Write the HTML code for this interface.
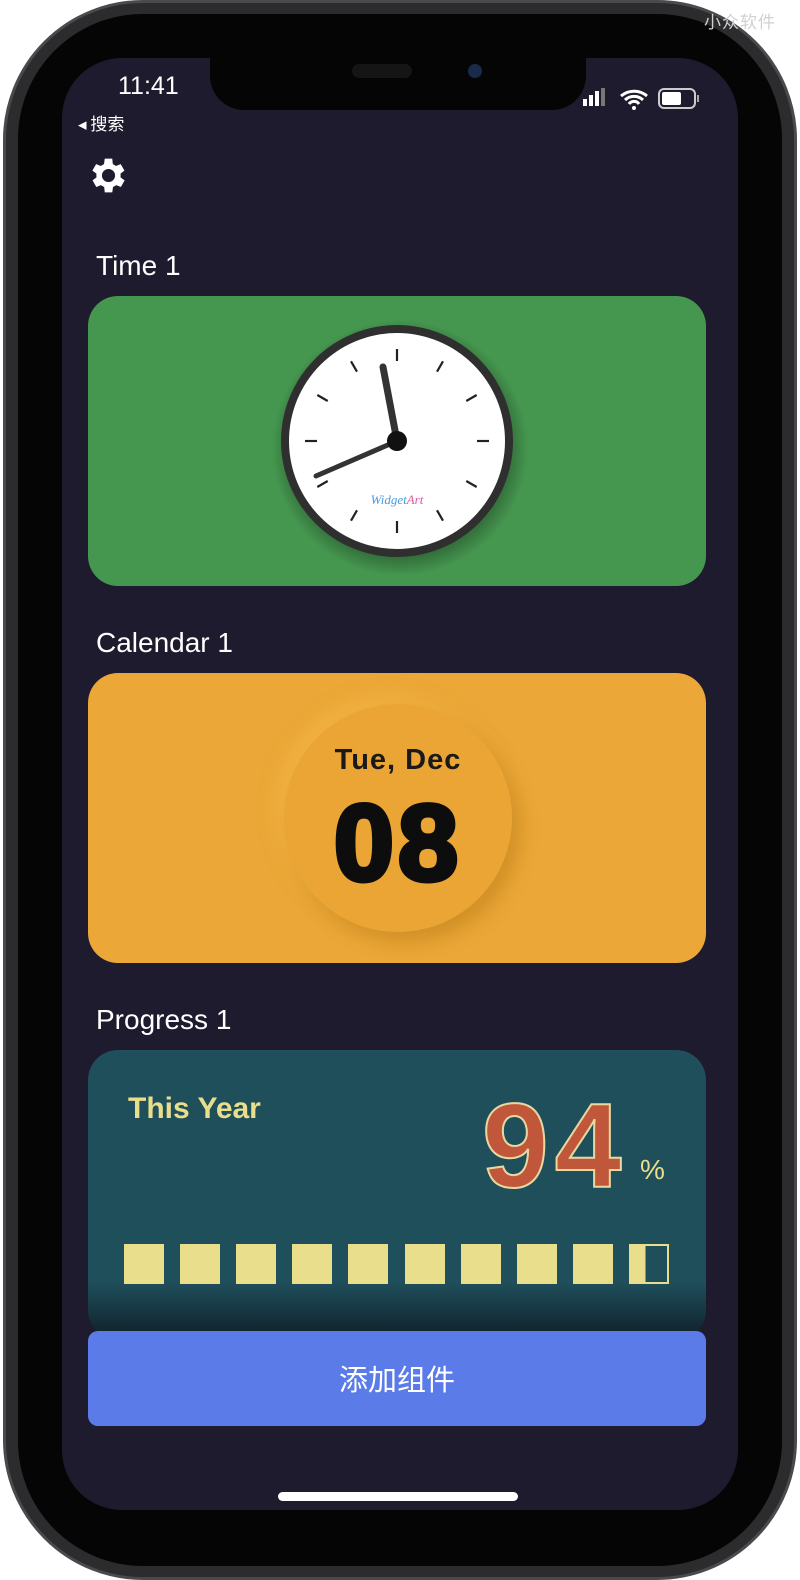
<!DOCTYPE html>
<html><head><meta charset="utf-8"><style>
*{margin:0;padding:0;box-sizing:border-box}
body{width:800px;height:1580px;background:#fff;position:relative;overflow:hidden;font-family:"Liberation Sans","Noto Sans CJK SC",sans-serif}
.abs{position:absolute}
.phone{left:3px;top:0;width:794px;height:1580px;border-radius:140px;background:#2c2c2e;border:3px solid #4a4a4c}
.bezel{left:18px;top:14px;width:764px;height:1552px;border-radius:125px;background:#050505}
.screen{left:62px;top:58px;width:676px;height:1452px;border-radius:60px;background:#1e1b2e;overflow:hidden}
.notch{left:210px;top:50px;width:376px;height:60px;background:#050505;border-radius:0 0 34px 34px}
.lbl{color:#fff;font-size:28px;font-weight:500}
.card{left:88px;width:618px;height:290px;border-radius:30px}
.sq{top:1244px;width:40px;height:40px;background:#e8de8c}
</style></head><body>
<div class="abs phone"></div>
<div class="abs bezel"></div>
<div class="abs screen"></div>
<div class="abs notch"></div>
<div class="abs" style="left:704px;top:8px;color:#d0d0d0;font-size:17px;letter-spacing:1px;font-family:'Noto Sans CJK SC',sans-serif;z-index:5">小众软件</div>
<div class="abs" style="left:352px;top:64px;width:60px;height:14px;border-radius:7px;background:#151515"></div>
<div class="abs" style="left:468px;top:64px;width:14px;height:14px;border-radius:7px;background:#1a2a4a"></div>
<div class="abs" style="left:118px;top:72px;color:#fff;font-size:25px;font-weight:500">11:41</div>
<div class="abs" style="left:78px;top:110px;color:#fff;font-size:17px;font-family:'Noto Sans CJK SC',sans-serif">◂ 搜索</div>
<svg class="abs" style="left:580px;top:86px" width="125" height="26">
<rect x="3" y="13" width="4" height="7" fill="#fff"/><rect x="9" y="9" width="4" height="11" fill="#fff"/><rect x="15" y="5" width="4" height="15" fill="#fff"/><rect x="21" y="2" width="4" height="18" fill="#777"/>
<path d="M41 10a20 20 0 0 1 26 0M45 14a13 13 0 0 1 18 0M49 18a6 6 0 0 1 10 0" stroke="#fff" stroke-width="3" fill="none"/><circle cx="54" cy="22" r="2" fill="#fff"/>
<rect x="79" y="3" width="36" height="19" rx="5" stroke="#ccc" stroke-width="2" fill="none"/><rect x="82" y="6" width="19" height="13" rx="2" fill="#fff"/><rect x="117" y="9" width="2" height="7" fill="#aaa"/>
</svg>
<svg class="abs" style="left:86px;top:153px" width="45" height="45" viewBox="0 0 24 24"><path fill="#fff" d="M19.4 13a7.5 7.5 0 0 0 0-2l2.1-1.6-2-3.5-2.5 1a7.4 7.4 0 0 0-1.7-1L15 3h-4l-.4 2.9a7.4 7.4 0 0 0-1.7 1l-2.5-1-2 3.5L6.6 11a7.5 7.5 0 0 0 0 2l-2.1 1.6 2 3.5 2.5-1a7.4 7.4 0 0 0 1.7 1L11 21h4l.4-2.9a7.4 7.4 0 0 0 1.7-1l2.5 1 2-3.5zM13 15.5a3.5 3.5 0 1 1 0-7 3.5 3.5 0 0 1 0 7z" transform="translate(-1 0)"/></svg>
<div class="abs lbl" style="left:96px;top:250px">Time 1</div>
<div class="abs card" style="top:296px;background:#45964f"></div>
<svg class="abs" style="left:270px;top:314px" width="260" height="260">
<defs><radialGradient id="sh"><stop offset="0.8" stop-color="#000" stop-opacity=".35"/><stop offset="1" stop-color="#000" stop-opacity="0"/></radialGradient></defs>
<circle cx="130" cy="134" r="128" fill="url(#sh)"/>
<circle cx="127" cy="127" r="116" fill="#2f2f2f"/>
<circle cx="127" cy="127" r="108" fill="#fff"/>
<g stroke="#222" stroke-width="2.2" transform="translate(127 127)">
<line x1="0" y1="-92" x2="0" y2="-80"/><line x1="0" y1="92" x2="0" y2="80"/><line x1="-92" y1="0" x2="-80" y2="0"/><line x1="92" y1="0" x2="80" y2="0"/>
<g transform="rotate(30)"><line x1="0" y1="-92" x2="0" y2="-80"/><line x1="0" y1="92" x2="0" y2="80"/><line x1="-92" y1="0" x2="-80" y2="0"/><line x1="92" y1="0" x2="80" y2="0"/></g>
<g transform="rotate(60)"><line x1="0" y1="-92" x2="0" y2="-80"/><line x1="0" y1="92" x2="0" y2="80"/><line x1="-92" y1="0" x2="-80" y2="0"/><line x1="92" y1="0" x2="80" y2="0"/></g>
</g>
<line x1="127" y1="127" x2="113" y2="53" stroke="#333" stroke-width="7" stroke-linecap="round"/>
<line x1="127" y1="127" x2="46" y2="162" stroke="#333" stroke-width="5" stroke-linecap="round"/>
<circle cx="127" cy="127" r="10" fill="#111"/>
<text x="127" y="190" text-anchor="middle" font-size="13" font-style="italic" font-family="Liberation Serif,serif" fill="#4a9be0">Widget<tspan fill="#e05a9a">Art</tspan></text>
</svg>
<div class="abs lbl" style="left:96px;top:627px">Calendar 1</div>
<div class="abs card" style="top:673px;background:#eba737"></div>
<div class="abs" style="left:284px;top:704px;width:228px;height:228px;border-radius:50%;background:#eaa535;box-shadow:8px 10px 18px rgba(160,100,10,.35),-8px -8px 18px rgba(255,200,90,.35)"></div>
<div class="abs" style="left:284px;top:744px;width:228px;text-align:center;font-size:29px;font-weight:bold;color:#1a1a1a;letter-spacing:1px">Tue, Dec</div>
<div class="abs" style="left:284px;top:786px;width:228px;text-align:center;font-size:108px;font-weight:900;color:#0d0d0d;-webkit-text-stroke:5px #0d0d0d;letter-spacing:4px;line-height:1.05">08</div>
<div class="abs lbl" style="left:96px;top:1004px">Progress 1</div>
<div class="abs card" style="top:1050px;height:290px;background:linear-gradient(#1f4f5b 0,#1f4f5b 80%,#0f1e28 100%)"></div>
<div class="abs" style="left:128px;top:1092px;font-size:30px;font-weight:bold;color:#e8de8c">This Year</div>
<div class="abs" style="left:482px;top:1080px;font-size:120px;font-weight:bold;font-family:'Liberation Sans',sans-serif;color:#c0573a;-webkit-text-stroke:2px #e8d8a0;letter-spacing:6px;line-height:1.1">94</div>
<div class="abs" style="left:640px;top:1154px;font-size:28px;color:#e8de8c">%</div>
<div class="abs sq" style="left:124px"></div><div class="abs sq" style="left:180px"></div><div class="abs sq" style="left:236px"></div><div class="abs sq" style="left:292px"></div><div class="abs sq" style="left:348px"></div><div class="abs sq" style="left:405px"></div><div class="abs sq" style="left:461px"></div><div class="abs sq" style="left:517px"></div><div class="abs sq" style="left:573px"></div>
<div class="abs sq" style="left:629px;background:linear-gradient(90deg,#e8de8c 40%,transparent 40%);border:2px solid #e8de8c"></div>
<div class="abs" style="left:88px;top:1331px;width:618px;height:95px;border-radius:10px;background:#5b7be9;color:#fff;font-size:29px;text-align:center;line-height:95px;font-family:'Noto Sans CJK SC',sans-serif">添加组件</div>
<div class="abs" style="left:278px;top:1492px;width:240px;height:9px;border-radius:5px;background:#fff"></div>
</body></html>
